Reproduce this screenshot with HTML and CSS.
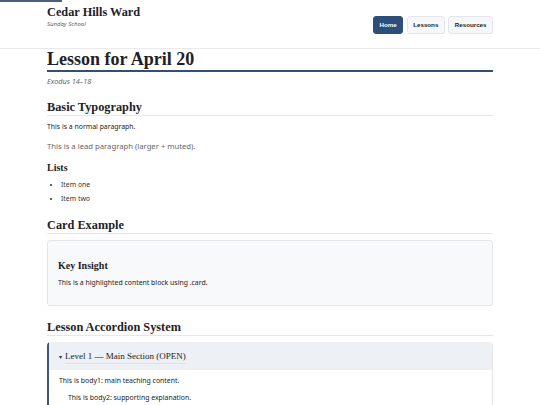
FILE: index.html
```html
<!DOCTYPE html>
<html lang="en">
<head>
<meta charset="utf-8">
<title>Lesson for April 20</title>
<link rel="stylesheet" href="styles.css">
</head>
<body>
<div class="progress"></div>
<header class="site-header">
  <div class="brand">
    <div class="brand-title">Cedar Hills Ward</div>
    <div class="brand-sub">Sunday School</div>
  </div>
  <nav class="nav">
    <a class="btn btn-primary" href="#">Home</a>
    <a class="btn" href="#">Lessons</a>
    <a class="btn" href="#">Resources</a>
  </nav>
</header>
<main class="main">
  <h1 class="page-title">Lesson for April 20</h1>
  <p class="scripture">Exodus 14–18</p>

  <h2 class="section-title">Basic Typography</h2>
  <p class="text">This is a normal paragraph.</p>
  <p class="lead">This is a lead paragraph (larger + muted).</p>

  <h3 class="sub-title">Lists</h3>
  <ul class="list">
    <li>Item one</li>
    <li>Item two</li>
  </ul>

  <h2 class="section-title">Card Example</h2>
  <div class="card">
    <h3 class="card-title">Key Insight</h3>
    <p class="text">This is a highlighted content block using .card.</p>
  </div>

  <h2 class="section-title">Lesson Accordion System</h2>
  <div class="accordion">
    <div class="acc-head"><span class="caret">▾</span><span class="acc-label">Level 1 — Main Section (OPEN)</span></div>
    <div class="acc-body">
      <p class="text">This is body1: main teaching content.</p>
      <p class="text body2">This is body2: supporting explanation.</p>
    </div>
  </div>
</main>
</body>
</html>
```
FILE: styles.css
```css
* { box-sizing: border-box; }
html, body { margin: 0; padding: 0; background: #fff; }
body {
  font-family: "Noto Sans", "Open Sans", sans-serif;
  color: #222;
  position: relative;
}
.progress {
  position: absolute;
  top: 0; left: 0;
  width: 62px; height: 2px;
  background: #4b5f7c;
}
.site-header {
  height: 49px;
  padding: 6px 47px 0;
  border-bottom: 1px solid #e9eaec;
  display: flex;
  justify-content: space-between;
  align-items: flex-start;
}
.brand-title {
  font-family: "Liberation Serif", serif;
  font-weight: 700;
  font-size: 12.3px;
  line-height: 13px;
  color: #1e2227;
}
.brand-sub {
  margin-top: 1px;
  font-size: 6px;
  line-height: 8px;
  font-style: italic;
  color: #666;
}
.nav { display: flex; gap: 3.5px; margin-top: 10px; }
.btn {
  display: block;
  height: 18px;
  line-height: 16px;
  padding: 0 5.5px;
  font-family: "Liberation Sans", Arial, sans-serif;
  font-weight: 700;
  font-size: 6.2px;
  color: #222;
  text-decoration: none;
  background: #f6f7f9;
  border: 1px solid #e3e6ea;
  border-radius: 3px;
}
.btn-primary { background: #2c4e7b; border-color: #2c4e7b; color: #fff; }
.main { padding: 0 47px; }
.page-title {
  margin: 0;
  font-family: "Liberation Serif", serif;
  font-weight: 700;
  font-size: 18px;
  line-height: 20px;
  padding-bottom: 1px;
  border-bottom: 2px solid #34506f;
  color: #1e2227;
}
.scripture {
  margin: 4px 0 0;
  font-size: 7.3px;
  line-height: 10px;
  font-style: italic;
  color: #666;
}
.section-title {
  margin: 13px 0 0;
  font-family: "Liberation Serif", serif;
  font-weight: 700;
  font-size: 12.3px;
  line-height: 15px;
  padding-top: 1px;
  border-bottom: 1px solid #e6e7e9;
  color: #1e2227;
}
.text {
  margin: 6px 0 0;
  font-size: 6.9px;
  line-height: 10px;
  color: #222;
}
.lead {
  margin: 8px 0 0;
  font-size: 7.7px;
  line-height: 12px;
  color: #666;
}
.sub-title {
  margin: 10px 0 0;
  font-family: "Liberation Serif", serif;
  font-weight: 700;
  font-size: 10px;
  line-height: 12px;
  color: #1e2227;
}
.list {
  margin: 6px 0 0;
  padding-left: 14px;
  font-size: 6.9px;
  line-height: 10px;
  color: #333;
}
.list li { margin-bottom: 4px; }
.list li:last-child { margin-bottom: 0; }
.card {
  margin-top: 6px;
  height: 66px;
  padding: 19px 10px 0;
  background: #f8f9fa;
  border: 1px solid #e4e6e9;
  border-radius: 3px;
}
.card-title {
  margin: 0;
  font-family: "Liberation Serif", serif;
  font-weight: 700;
  font-size: 10px;
  line-height: 12px;
  color: #1e2227;
}
.accordion {
  margin-top: 6px;
  border-left: 2px solid #3d5775;
  border-right: 1px solid #e6e7e9;
  border-radius: 4px 4px 0 0;
}
.acc-head {
  height: 28px;
  padding: 0 10px;
  display: flex;
  align-items: center;
  background: #edf1f6;
  font-family: "Liberation Serif", serif;
  font-size: 9px;
  color: #222;
  border-radius: 0 3px 0 0;
}
.caret { font-size: 6px; margin-right: 3px; color: #333; }
.acc-label { border-bottom: 1px solid #dde3ea; line-height: 13px; padding-top: 2px; }
.acc-body { padding: 0 10px 10px; background: #fff; }
.acc-body .text { margin-top: 6px; }
.acc-body .body2 { padding-left: 9px; margin-top: 7px; }
```
